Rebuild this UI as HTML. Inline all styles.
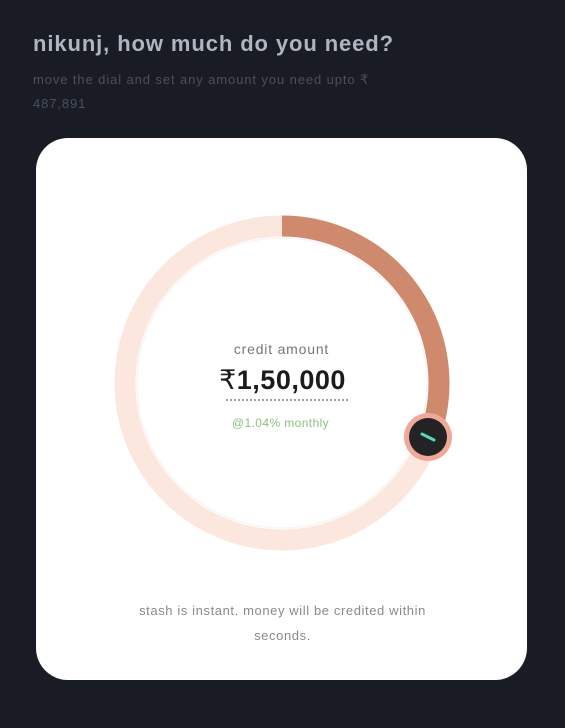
<!DOCTYPE html>
<html><head><style>
body{margin:0;width:565px;height:728px;background:#191c25;font-family:"Liberation Sans",sans-serif;position:relative;overflow:hidden}
h1{position:absolute;left:33px;top:31px;margin:0;font-size:22px;font-weight:bold;color:#aeb6bf;letter-spacing:0.9px}
.sub{position:absolute;left:33px;top:68px;font-size:13px;color:#4a505b;line-height:24px;width:420px;letter-spacing:0.9px}
.card{position:absolute;left:36px;top:138px;width:491px;height:542px;background:#fff;border-radius:32px}
.t{position:absolute;width:100%;text-align:center}
</style></head><body>
<h1>nikunj, how much do you need?</h1>
<div class="sub">move the dial and set any amount you need upto ₹<br>487,891</div>
<div class="card"></div>
<svg style="position:absolute;left:0;top:0" width="565" height="728">
<circle cx="282" cy="383" r="157" fill="none" stroke="#fbe7de" stroke-width="21"/>
<circle cx="282" cy="383" r="145" fill="none" stroke="#f6f3f2" stroke-width="1.2"/>
<path d="M282 226 A157 157 0 0 1 429.5 436.7" fill="none" stroke="#cf8a6d" stroke-width="21"/>
<circle cx="428" cy="437" r="24" fill="#f0a899"/>
<circle cx="428" cy="437" r="19" fill="#232326"/>
<line x1="422" y1="434" x2="434" y2="440" stroke="#5fd3b7" stroke-width="3" stroke-linecap="round"/>
<line x1="226" y1="400" x2="350" y2="400" stroke="#666" stroke-width="1.2" stroke-dasharray="2 2"/>
</svg>
<div class="t" style="left:0;top:341px;width:565px;font-size:14px;color:#777;letter-spacing:0.8px;margin-left:-1px">credit amount</div>
<div class="t" style="left:0;top:365px;width:565px;font-size:27px;font-weight:bold;color:#1c1c1c;letter-spacing:0.5px"><span style="font-weight:normal">₹</span>1,50,000</div>
<div class="t" style="left:0;top:416px;width:565px;font-size:12px;color:#8ac27d;margin-left:-2px;letter-spacing:0.4px">@1.04% monthly</div>
<div class="t" style="left:0;top:598px;width:565px;font-size:13px;color:#8a8a8a;line-height:25px;letter-spacing:0.6px">stash is instant. money will be credited within<br>seconds.</div>
</body></html>
